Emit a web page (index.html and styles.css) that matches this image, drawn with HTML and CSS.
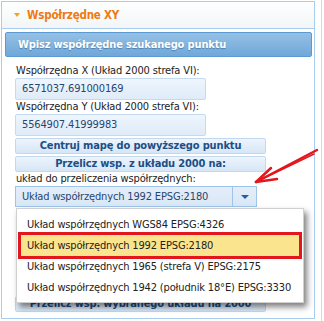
FILE: index.html
```html
<!DOCTYPE html>
<html>
  <head>
    <meta charset="utf-8">
    <title>Współrzędne XY</title>
    <link rel="stylesheet" href="styles.css">
  </head>

  <body>
    <div class="page">
      <div class="panel">
        <div class="panel-header"><span class="caret"></span>Współrzędne XY</div>
        <div class="panel-body">
          <div class="bar">Wpisz współrzędne szukanego punktu</div>
          <div class="form">
            <div class="label">Współrzędna X (Układ 2000 strefa VI):</div>
            <div class="input">6571037.691000169</div>
            <div class="label">Współrzędna Y (Układ 2000 strefa VI):</div>
            <div class="input">5564907.41999983</div>
            <button class="btn">Centruj mapę do powyższego punktu</button>
            <button class="btn">Przelicz wsp. z układu 2000 na:</button>
            <div class="label">układ do przeliczenia współrzędnych:</div>
            <div class="select-wrap">
              <div class="select">
                <span class="select-value">Układ współrzędnych 1992 EPSG:2180</span>
                <span class="select-btn"><span class="tri"></span></span>
              </div>
              <ul class="options">
                <li>Układ współrzędnych WGS84 EPSG:4326</li>
                <li class="selected">Układ współrzędnych 1992 EPSG:2180</li>
                <li>Układ współrzędnych 1965 (strefa V) EPSG:2175</li>
                <li>Układ współrzędnych 1942 (południk 18°E) EPSG:3330</li>
              </ul>
            </div>
            <div class="result-space"></div>
            <button class="btn">Przelicz wsp. wybranego układu na 2000</button>
          </div>
        </div>
      </div>

      <svg class="arrow" width="74" height="46" viewBox="0 0 74 46">
        <path d="M67 5 L6 37" stroke="#e4161d" stroke-width="2.5" fill="none" stroke-linecap="round"/>
        <path d="M64 9 L8 36" stroke="#e4161d" stroke-width="1.5" fill="none" stroke-linecap="round"/>
        <path d="M6 37 L21 23" stroke="#e4161d" stroke-width="2.5" fill="none" stroke-linecap="round"/>
        <path d="M6 37 L27 34" stroke="#e4161d" stroke-width="2.5" fill="none" stroke-linecap="round"/>
      </svg>
    </div>
  </body>
</html>
```

FILE: styles.css
```css
body {
  margin: 0;
  background-color: white;
  font-family: 'DejaVu Sans Condensed', 'DejaVu Sans', sans-serif;
  font-size: 11px;
  letter-spacing: -0.15px;
  color: #222;
}

.page {
  position: relative;
  width: 322px;
  height: 321px;
  padding: 1px 0 0 1px;
  box-sizing: border-box;
  border-right: 1px solid #c3dbf1;
}

.panel {
  width: 314px;
}

.panel-header {
  height: 28px;
  box-sizing: border-box;
  border: 1px solid #a9cdee;
  background: linear-gradient(#ffffff, #f2f5f7);
  display: flex;
  align-items: center;
  padding-left: 12px;
  color: #ee7a12;
  font-weight: bold;
  font-size: 11.5px;
  letter-spacing: -0.2px;
}

.caret {
  width: 0;
  height: 0;
  border-left: 3.5px solid transparent;
  border-right: 3.5px solid transparent;
  border-top: 4px solid #f2a31b;
  margin-right: 7px;
}

.panel-body {
  height: 290px;
  box-sizing: border-box;
  border: 1px solid #a9cdee;
  border-top: none;
  padding: 3px 2px 0 3px;
}

.bar {
  height: 25px;
  box-sizing: border-box;
  border: 1px solid #5b9ad2;
  border-radius: 2px;
  background: linear-gradient(#95c0e5, #70a8d8);
  color: white;
  font-weight: bold;
  text-shadow: 0 1px 1px #4d7fae;
  display: flex;
  align-items: center;
  padding-left: 12px;
}

.form {
  padding: 7px 0 0 10px;
  display: flex;
  flex-direction: column;
  align-items: flex-start;
}

.label {
  line-height: 14px;
  padding-left: 1px;
  white-space: nowrap;
}

.input {
  width: 191px;
  height: 22px;
  box-sizing: border-box;
  border: 1px solid #c4daf1;
  border-radius: 2px;
  background: linear-gradient(#eef5fd, #dfebf8);
  color: #28466e;
  padding-left: 6px;
  line-height: 20px;
}

.btn {
  width: 251px;
  height: 16px;
  box-sizing: border-box;
  margin-top: 2px;
  border: 1px solid #c2d8ef;
  border-radius: 2px;
  background: linear-gradient(#edf4fc, #d6e6f6);
  color: #1c4f86;
  font-family: inherit;
  font-weight: bold;
  font-size: 11px;
  letter-spacing: -0.15px;
  padding: 0;
  line-height: 14px;
  white-space: nowrap;
}

.select-wrap {
  position: relative;
}

.select {
  width: 242px;
  height: 21px;
  box-sizing: border-box;
  border: 1px solid #9ec4ea;
  background: linear-gradient(#e4eefa, #d9e7f6);
  display: flex;
  color: #28466e;
}

.select-value {
  flex: 1;
  padding-left: 6px;
  line-height: 19px;
  white-space: nowrap;
}

.select-btn {
  width: 23px;
  border-left: 1px solid #9ec4ea;
  display: flex;
  align-items: center;
  justify-content: center;
}

.tri {
  width: 0;
  height: 0;
  border-left: 4px solid transparent;
  border-right: 4px solid transparent;
  border-top: 4px solid #1f5fa3;
}

.options {
  position: absolute;
  top: 22px;
  left: 1px;
  width: 288px;
  margin: 0;
  padding: 5px 4px 4px 4px;
  box-sizing: border-box;
  list-style: none;
  background: white;
  border: 1px solid #d0d0d0;
  box-shadow: 3px 4px 6px rgba(0, 0, 0, 0.5);
  z-index: 10;
}

.options li {
  height: 21px;
  line-height: 21px;
  padding-left: 6px;
  color: #222;
  white-space: nowrap;
}

.options li.selected {
  background: #fbe48e;
  outline: 3px solid #e3161e;
  outline-offset: 0;
}

.result-space {
  height: 87px;
}

.arrow {
  position: absolute;
  left: 250px;
  top: 145px;
  z-index: 11;
}
```
